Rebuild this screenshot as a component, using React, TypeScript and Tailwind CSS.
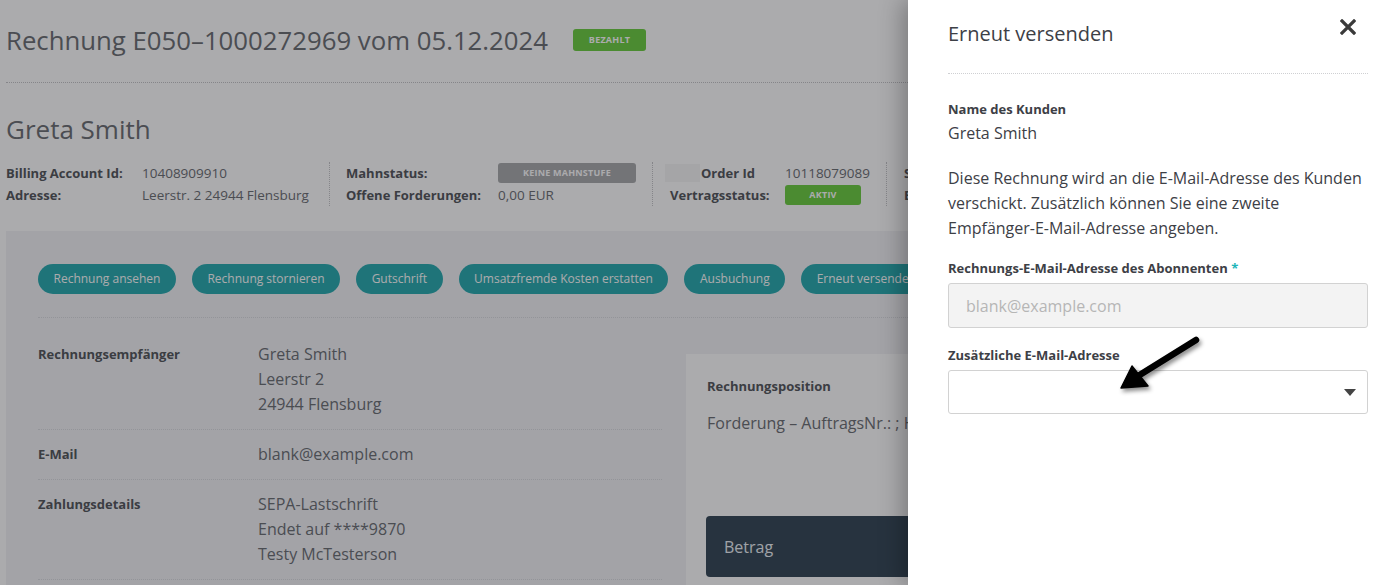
import React from 'react';

const font = { fontFamily: '"Open Sans", "Noto Sans", sans-serif' };

const actions = [
  'Rechnung ansehen',
  'Rechnung stornieren',
  'Gutschrift',
  'Umsatzfremde Kosten erstatten',
  'Ausbuchung',
  'Erneut versenden',
];

const Badge: React.FC<{ color: string; className?: string; children: React.ReactNode }> = ({ color, className, children }) => (
  <span
    className={`inline-flex items-center justify-center rounded-[3px] text-[9px] font-bold uppercase tracking-wide text-white ${color} ${className ?? ''}`}
  >
    {children}
  </span>
);

function InvoicePage() {
  return (
    <div className="w-[908px] overflow-hidden">
      <div className="w-[1380px] text-[#6f7277]">
        {/* title */}
        <div className="mx-[6px] flex h-[83px] items-center gap-[25px] border-b border-dotted border-[#c6c7ca] pb-[3px]">
          <h1 className="text-[25.75px] leading-8 text-[#6f7277]">Rechnung E050–1000272969 vom 05.12.2024</h1>
          <Badge color="bg-[#6fcf45]" className="h-[22px] w-[73px]">Bezahlt</Badge>
        </div>

        <h2 className="mx-[6px] mt-[30px] text-[26px] leading-8 text-[#6f7277]">Greta Smith</h2>

        {/* account info */}
        <div className="mx-[6px] mt-[17px] flex text-[13.5px] leading-[22px]">
          <div className="grid w-[323px] grid-cols-[136px_1fr]">
            <span className="text-[13px] font-bold text-[#575a5f]">Billing Account Id:</span>
            <span>10408909910</span>
            <span className="text-[13px] font-bold text-[#575a5f]">Adresse:</span>
            <span>Leerstr. 2 24944 Flensburg</span>
          </div>
          <div className="grid w-[323px] grid-cols-[152px_1fr] border-l border-dotted border-[#c6c7ca] pl-[16px]">
            <span className="text-[13px] font-bold text-[#575a5f]">Mahnstatus:</span>
            <span className="flex items-center">
              <Badge color="bg-[#acadaf]" className="h-[20px] w-[138px]">Keine Mahnstufe</Badge>
            </span>
            <span className="text-[13px] font-bold text-[#575a5f]">Offene Forderungen:</span>
            <span>0,00 EUR</span>
          </div>
          <div className="grid w-[234px] grid-cols-[120px_1fr] border-l border-dotted border-[#c6c7ca] pl-[12px]">
            <span className="flex items-center gap-[1px] text-[13px] font-bold text-[#575a5f]">
              <span className="h-[18px] w-[35px] bg-[#f6f6f6]" />
              Order Id
            </span>
            <span>10118079089</span>
            <span className="pl-[5px] text-[13px] font-bold text-[#575a5f]">Vertragsstatus:</span>
            <span className="flex items-center">
              <Badge color="bg-[#6fcf45]" className="h-[20px] w-[76px]">Aktiv</Badge>
            </span>
          </div>
          <div className="grid grid-cols-[120px_1fr] border-l border-dotted border-[#c6c7ca] pl-[17px]">
            <span className="text-[13px] font-bold text-[#575a5f]">S</span>
            <span />
            <span className="text-[13px] font-bold text-[#575a5f]">E</span>
            <span />
          </div>
        </div>

        {/* card */}
        <div className="mx-[6px] mt-[25px] h-[360px] bg-[#f3f4f7] px-[32px] pt-[33px]">
          <div className="flex gap-[16px] border-b border-dotted border-[#dcdde1] pb-[23px]">
            {actions.map((a) => (
              <button
                key={a}
                className="h-[30px] shrink-0 rounded-full bg-[#2eadb2] px-[15.5px] text-[12px] text-white"
              >
                {a}
              </button>
            ))}
          </div>

          <div className="flex items-start gap-[24px]">
            <div className="mt-[12px] w-[624px] text-[16px] leading-[25px]">
              <div className="flex border-b border-dotted border-[#dcdde1] py-[12px]">
                <span className="w-[220px] text-[13px] font-bold text-[#575a5f]">Rechnungsempfänger</span>
                <div className="flex flex-col">
                  <span>Greta Smith</span>
                  <span>Leerstr 2</span>
                  <span>24944 Flensburg</span>
                </div>
              </div>
              <div className="flex border-b border-dotted border-[#dcdde1] py-[12px]">
                <span className="w-[220px] text-[13px] font-bold text-[#575a5f]">E-Mail</span>
                <span>blank@example.com</span>
              </div>
              <div className="flex border-b border-dotted border-[#dcdde1] py-[12px]">
                <span className="w-[220px] text-[13px] font-bold text-[#575a5f]">Zahlungsdetails</span>
                <div className="flex flex-col">
                  <span>SEPA-Lastschrift</span>
                  <span>Endet auf ****9870</span>
                  <span>Testy McTesterson</span>
                </div>
              </div>
            </div>

            <div className="mt-[36px] h-[260px] flex-1 bg-white px-[20px] pt-[24px]">
              <div className="pl-[1px] text-[13px] font-bold leading-4 text-[#575a5f]">Rechnungsposition</div>
              <div className="mt-[18px] pl-[1px] text-[16px] leading-[22px] whitespace-nowrap">
                Forderung – AuftragsNr.: ; Hardware
              </div>
              <div className="mt-[82px] flex h-[61px] items-center rounded-[4px] bg-[#394c5b] px-[18px] text-[16px] text-[#eef2f6]">
                Betrag
              </div>
            </div>
          </div>
        </div>
      </div>
    </div>
  );
}

function ResendDrawer() {
  return (
    <div className="absolute right-0 top-0 flex h-full w-[472px] flex-col bg-white pl-[40px] pr-[12px] text-[#3d4046] shadow-[-6px_0_22px_rgba(0,0,0,0.28)]">
      <div className="flex items-start justify-between border-b border-dotted border-[#cfd0d3] pt-[20px] pb-[25px]">
        <h3 className="text-[20px] leading-7">Erneut versenden</h3>
        <svg width="16" height="16" viewBox="0 0 16 16" className="mr-[12px] mt-[-1px]">
          <path d="M2 2L14 14M14 2L2 14" stroke="#3a3a3a" strokeWidth="3.2" strokeLinecap="square" />
        </svg>
      </div>

      <div className="mt-[25px] text-[13px] font-bold leading-5">Name des Kunden</div>
      <div className="mt-[3px] text-[16px] leading-[22px]">Greta Smith</div>

      <p className="mt-[22px] text-[16px] leading-[25px]">
        Diese Rechnung wird an die E-Mail-Adresse des Kunden verschickt. Zusätzlich können Sie eine zweite
        Empfänger-E-Mail-Adresse angeben.
      </p>

      <div className="mt-[17px] text-[13px] font-bold leading-5">
        Rechnungs-E-Mail-Adresse des Abonnenten <span className="text-[#1fb5b8]">*</span>
      </div>
      <div className="mt-[5px] flex h-[45px] items-center rounded-[3px] border border-[#d2d2d2] bg-[#f3f3f3] pl-[17px] text-[16px] text-[#b6b6b6]">
        blank@example.com
      </div>

      <div className="mt-[17px] text-[13px] font-bold leading-5">Zusätzliche E-Mail-Adresse</div>
      <div className="mt-[5px] flex h-[44px] items-center justify-end rounded-[3px] border border-[#d2d2d2] bg-white pr-[11px]">
        <svg width="12" height="7" viewBox="0 0 12 7">
          <path d="M0 0H12L6 7Z" fill="#444" />
        </svg>
      </div>
    </div>
  );
}

function PointerArrow() {
  return (
    <svg
      className="pointer-events-none absolute left-[1110px] top-[330px] drop-shadow-[2px_3px_2px_rgba(0,0,0,0.45)]"
      width="100"
      height="70"
      viewBox="1110 330 100 70"
    >
      <path d="M1196 340L1138 376" stroke="#000" strokeWidth="6.5" strokeLinecap="round" />
      <path d="M1121 388L1132 366L1148 386Z" fill="#000" stroke="#000" strokeWidth="1.5" strokeLinejoin="round" />
    </svg>
  );
}

export default function App() {
  return (
    <div className="relative h-[585px] w-[1380px] overflow-hidden bg-white" style={font}>
      <InvoicePage />
      <div className="absolute inset-0 bg-[#020409]/[0.333]" />
      <ResendDrawer />
      <PointerArrow />
    </div>
  );
}
